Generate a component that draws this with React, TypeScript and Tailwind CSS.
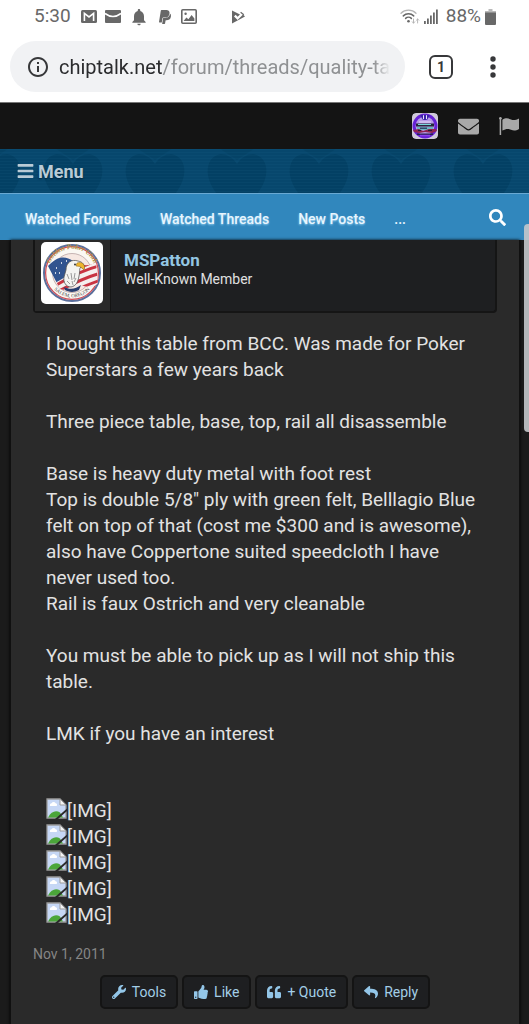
import React from 'react';
import {
  FaBars,
  FaEnvelope,
  FaPaypal,
  FaQuoteLeft,
  FaReply,
  FaSearch,
  FaThumbsUp,
  FaWrench,
} from 'react-icons/fa';
import { MdInfoOutline, MdNotifications } from 'react-icons/md';

const GmailIcon = () => (
  <svg viewBox="0 0 16 13" className="h-[13px] w-4" aria-hidden="true">
    <rect width="16" height="13" rx="1.5" fill="#686868" />
    <path d="M3.4 11V3.4L8 7L12.6 3.4V11" fill="none" stroke="#fff" strokeWidth="1.6" />
  </svg>
);

const MailIcon = () => (
  <svg viewBox="0 0 16 13" className="h-[13px] w-4" aria-hidden="true">
    <rect width="16" height="13" rx="1" fill="#686868" />
    <path d="M0 3.4Q8 9.6 16 3.4" fill="none" stroke="#fff" strokeWidth="1.6" />
  </svg>
);

const PictureIcon = () => (
  <svg viewBox="0 0 16 15" className="h-[15px] w-4" aria-hidden="true">
    <rect x="0.8" y="0.8" width="14.4" height="13.4" rx="1" fill="none" stroke="#686868" strokeWidth="1.6" />
    <circle cx="4.6" cy="4.8" r="1.2" fill="#686868" />
    <path d="M2.6 12L5.4 8.4L7.4 10.2L10.6 6L13.4 9.6V12Z" fill="#686868" />
  </svg>
);

const PlayCheckIcon = () => (
  <svg viewBox="0 0 14 14" className="h-[14px] w-[14px]" aria-hidden="true">
    <path d="M1 0.5L9 4.4L6.6 6.8L4.6 4.8L3 6.4L6.6 10L12 4.600L14 6.600L1 13.5Z" fill="#686868" />
    <path d="M9.600 2.200L12.800 4.800" stroke="#686868" strokeWidth="1.2" />
  </svg>
);

const WifiIcon = () => (
  <svg viewBox="0 0 20 16" className="h-4 w-5" aria-hidden="true">
    <g fill="none" strokeLinecap="round">
      <path d="M1 4.2C5 0.2 12 0.2 16 4.2" stroke="#b5b5b5" strokeWidth="1.3" />
      <path d="M3.3 6.9C6.2 4 10.8 4 13.7 6.9" stroke="#686868" strokeWidth="1.5" />
      <path d="M5.6 9.4C7.2 7.8 9.8 7.8 11.4 9.4" stroke="#686868" strokeWidth="1.5" />
      <path d="M13.5 10v4M12.3 12.800l1.2 1.4l1.2-1.4M17.6 14v-4M16.4 11.200L17.6 10l1.2 1.2" stroke="#b0b0b0" strokeWidth="0.9" />
    </g>
    <circle cx="8.5" cy="12.2" r="1.3" fill="#686868" />
  </svg>
);

const SignalIcon = () => (
  <svg viewBox="0 0 14 15" className="h-[15px] w-[14px]" aria-hidden="true">
    <path
      d="M0 12h1.8v3H0zM3 9.5h1.8V15H3zM6 6.5h1.8V15H6zM9 3.5h1.8V15H9zM12 0.5h1.8V15H12z"
      fill="#686868"
    />
  </svg>
);

const BatteryIcon = () => (
  <svg viewBox="0 0 11 16" className="h-4 w-[11px]" aria-hidden="true">
    <path d="M3.5 0h4v2H11v2H0V2h3.5z" fill="#b9b9b9" />
    <path d="M0 3.4h11V15a1 1 0 0 1-1 1H1a1 1 0 0 1-1-1z" fill="#686868" />
  </svg>
);

const FlagIcon = () => (
  <svg viewBox="0 0 20 18" className="h-[18px] w-5" aria-hidden="true">
    <path d="M1.4 1V18" stroke="#a9a9a9" strokeWidth="1.5" />
    <circle cx="1.4" cy="1.3" r="1.3" fill="#a9a9a9" />
    <path d="M3.4 2.8C7 0.4 9.4 1.3 12 2.5C14.6 3.7 17 3 20 1.4V12C17 13.8 14.6 14 12 12.8C9.4 11.6 7 11.5 3.4 13.6Z" fill="#a9a9a9" />
  </svg>
);

const AccountAvatar = () => (
  <svg viewBox="0 0 26 26" className="h-[26px] w-[26px] rounded" aria-hidden="true">
    <rect width="26" height="26" rx="4" fill="#cfc9d9" />
    <circle cx="13" cy="13" r="11" fill="#b79ae8" stroke="#6722d6" strokeWidth="3" />
    <path d="M8 2l3 5h4l3-5" fill="#3a22a8" />
    <path d="M11.5 2.2v4M14.5 2.2v4" stroke="#e8e2ff" strokeWidth="1" />
    <path d="M7 8.500h12v1H7z" fill="#e3dcf5" />
    <path d="M4 10.5h18v3H4z" fill="#26263a" />
    <path d="M6 11h13v1H6z" fill="#79d6dd" />
    <path d="M5 14h16v3H5z" fill="#6bb5c2" />
    <path d="M8 14.5h7v1.6H8z" fill="#31476b" />
    <path d="M1 17l6-1 4 2 6-2 7 0 1 2-5 2-7-1-6 1-5-1z" fill="#8f2450" />
    <path d="M6 17h3v1H6zM16 17h4v1h-4z" fill="#241b3c" />
    <path d="M5 20.5h16v1.6H5z" fill="#27204f" />
    <path d="M8 22.5h10" stroke="#8a3cf0" strokeWidth="1.4" />
  </svg>
);

const MemberAvatar = () => (
  <svg viewBox="0 0 62 62" className="h-[62px] w-[62px]" role="img" aria-label="MSPatton">
    <defs>
      <clipPath id="flag">
        <path d="M7 24C17 13 25 14 32 19C42 25 50 24 55 20L57 41C49 50 43 41 34 44C27 47 24 49 19 47Z" />
      </clipPath>
      <path id="arc-bottom" d="M10 43A24 24 0 0 0 52 43" />
      <path id="arc-top" d="M8 24A24 24 0 0 1 54 24" />
    </defs>
    <rect width="62" height="62" rx="5" fill="#fff" />
    <circle cx="31" cy="31" r="28" fill="#fbf8f3" stroke="#5b6f9c" strokeWidth="2" />
    <circle cx="31" cy="31" r="26.4" fill="none" stroke="#cf4a55" strokeWidth="1.2" />
    <circle cx="31" cy="31" r="19.5" fill="#f7e8e2" stroke="#b9a4a4" strokeWidth="0.8" />
    <g clipPath="url(#flag)">
      <rect width="62" height="62" fill="#f5efee" />
      <g fill="none" stroke="#c93442" strokeWidth="3">
        <path d="M10 46C22 40 34 30 58 24" />
        <path d="M10 53C24 46 38 37 60 31" />
        <path d="M18 56C30 50 42 44 60 38" />
        <path d="M22 62C34 54 46 50 60 45" />
        <path d="M30 24C40 27 48 22 58 17" />
      </g>
      <path d="M5 24L20 10L34 18L26 34L14 41Z" fill="#31548f" />
      <path d="M15 26h1M20 21h1M25 19h1M18 31h1M14 31h1" stroke="#fff" strokeWidth="1.6" />
    </g>
    <path d="M25 28C25 20 31 17 37 19C42 20 44 23 43 27L40 25C38 26 39 30 38 34C37 40 35 44 30 45C25 45 22 40 23 35Z" fill="#f4f4f1" stroke="#555" strokeWidth="0.8" />
    <path d="M36 21C41 19 45 23 43 28L39 24.5L35 24Z" fill="#eeb52c" stroke="#8b6519" strokeWidth="0.5" />
    <path d="M26 32l2 5M30 31l1 7M34 31l-1 6M26 39l3 3M31 39l1 4M35 36l-2 4" stroke="#999" strokeWidth="1" />
    <circle cx="34" cy="22.5" r="0.9" fill="#222" />
    <path d="M23 45C29 48 35 47 40 43L38 48C33 51 27 50 24 48Z" fill="#293f70" />
    <text fontFamily="Liberation Serif, serif" fontSize="7" fontWeight="700" fontStyle="italic" fill="#a99141" textAnchor="middle">
      <textPath href="#arc-top" startOffset="50%">Golden Poker Club</textPath>
    </text>
    <text fontFamily="Liberation Serif, serif" fontSize="5" fill="#444" textAnchor="middle">
      <textPath href="#arc-bottom" startOffset="50%">SALEM, OREGON</textPath>
    </text>
  </svg>
);

const BrokenImage = () => (
  <svg viewBox="0 0 21 21" className="h-[21px] w-[21px] shrink-0" aria-hidden="true">
    <path d="M1 1H14L20 7V20H1Z" fill="#c6d7f5" stroke="#9b9b9b" strokeWidth="1.3" />
    <path d="M4 8a2 2 0 0 1 1.6-2.8a2.2 2.2 0 0 1 4 0A1.6 1.6 0 0 1 10.5 8Z" fill="#fff" />
    <path d="M2 19.4C5 13.5 10 11.6 14 14.5L17 19.4Z" fill="#4ba63a" />
    <path d="M14 1V7H20Z" fill="#f4f4f4" stroke="#9b9b9b" strokeWidth="1" />
    <path d="M9 21L21 10.5V13L12 21Z" fill="#2a2a2a" />
  </svg>
);

const HeartPattern = () => (
  <svg className="absolute inset-0 h-full w-full" aria-hidden="true">
    <defs>
      <pattern id="hearts" width="82" height="44" x="32" patternUnits="userSpaceOnUse">
        <path d="M0 0H82V44H0Z" fill="#07476d" />
        <path d="M24 0H58L41 11Z" fill="#054367" />
        <path d="M41 15C34 3 20 2 14 12C9 21 12 33 20 44H62C70 33 73 21 68 12C62 2 48 3 41 15Z" fill="#034064" />
      </pattern>
      <pattern id="lines" width="4" height="3" patternUnits="userSpaceOnUse">
        <path d="M0 0.5H4" stroke="#1a5f86" strokeWidth="1" opacity="0.15" />
      </pattern>
    </defs>
    <rect width="100%" height="100%" fill="url(#hearts)" />
    <rect width="100%" height="100%" fill="url(#lines)" />
  </svg>
);

const StatusBar = () => (
  <div className="flex h-[33px] items-center pr-[33px] pl-[34px] text-[19px] text-[#686868]">
    <span>5:30</span>
    <div className="ml-[10px] flex items-center gap-2">
      <GmailIcon />
      <MailIcon />
      <MdNotifications className="h-5 w-5" />
      <FaPaypal className="h-4 w-4" />
      <PictureIcon />
    </div>
    <div className="ml-[34px]">
      <PlayCheckIcon />
    </div>
    <div className="ml-auto flex items-center gap-1">
      <WifiIcon />
      <SignalIcon />
      <span className="ml-1">88%</span>
      <BatteryIcon />
    </div>
  </div>
);

const AddressBar = () => (
  <div className="flex items-center pt-2 pr-6 pb-[10px] pl-[10px]">
    <button
      type="button"
      aria-label="Address bar"
      className="flex h-[51px] min-w-0 flex-1 items-center rounded-full bg-[#f1f2f4] pr-3 pl-4 text-left text-[20px]"
    >
      <MdInfoOutline className="h-6 w-6 shrink-0 text-[#37383a]" />
      <span className="ml-[9px] overflow-hidden whitespace-nowrap text-[#8f9193] [mask-image:linear-gradient(to_right,#000_calc(100%-16px),transparent)]">
        <span className="text-[#2b2c2e]">chiptalk.net</span>/forum/threads/quality-ta
      </span>
    </button>
    <button
      type="button"
      aria-label="Open tabs"
      className="ml-6 flex h-6 w-6 items-center justify-center rounded-md border-2 border-[#37383a] text-sm font-bold text-[#37383a]"
    >
      1
    </button>
    <button type="button" aria-label="More options" className="ml-7 flex h-8 w-6 items-center justify-center">
      <svg viewBox="0 0 6 22" className="h-[22px] w-[6px]" fill="#37383a" aria-hidden="true">
        <circle cx="3" cy="3" r="2.7" />
        <circle cx="3" cy="11" r="2.7" />
        <circle cx="3" cy="19" r="2.7" />
      </svg>
    </button>
  </div>
);

const ForumHeader = () => (
  <header>
    <div className="flex h-[47px] items-center justify-end gap-5 border-t border-[#777] bg-[#141414] pr-[10px]">
      <a href="#account" aria-label="Account">
        <AccountAvatar />
      </a>
      <a href="#inbox" aria-label="Inbox">
        <FaEnvelope className="h-[21px] w-[21px] text-[#a9a9a9]" />
      </a>
      <a href="#alerts" aria-label="Alerts">
        <FlagIcon />
      </a>
    </div>
    <div className="relative h-11 bg-[#07476d]">
      <HeartPattern />
      <button
        type="button"
        className="relative flex h-full items-center gap-1 pl-[17px] text-[18px] font-bold text-[#b9cbd6] [text-shadow:0_1px_2px_#002238]"
      >
        <FaBars className="h-[18px] w-[17px]" />
        Menu
      </button>
    </div>
    <nav className="flex h-[47px] items-center border-t border-[#69a9d3] bg-[#3187bd] pt-1 pr-[23px] pl-[25px] text-sm font-medium text-[#e8f5fd] [text-shadow:0_1px_2px_#8fcdf0]">
      <a href="#watched-forums">Watched Forums</a>
      <a href="#watched-threads" className="ml-[29px]">Watched Threads</a>
      <a href="#new-posts" className="ml-[29px]">New Posts</a>
      <button type="button" aria-label="More links" className="ml-[29px]">...</button>
      <button type="button" aria-label="Search" className="ml-auto pb-1">
        <FaSearch className="h-[17px] w-[17px] text-white" />
      </button>
    </nav>
  </header>
);

const images = [1, 2, 3, 4, 5];

const actions = [
  { label: 'Tools', icon: FaWrench },
  { label: 'Like', icon: FaThumbsUp },
  { label: '+ Quote', icon: FaQuoteLeft },
  { label: 'Reply', icon: FaReply },
];

const Post = () => (
  <article className="mr-[9px] ml-[10px] border-x border-[#101010] bg-[#2a2a2a] pr-[22px] pb-4 pl-[22px] shadow-[0_0_3px_#000]">
    <div className="flex h-[73px] rounded-b border-2 border-t-0 border-[#151515] bg-[#1e1f21]">
      <div className="w-[76px] shrink-0 border-r border-[#141414] bg-[#292929] pt-[2px] pl-[6px]">
        <MemberAvatar />
      </div>
      <div className="pt-[9px] pl-[13px]">
        <a href="#mspatton" className="block text-[17px] leading-[22px] font-bold text-[#93c6e3]">
          MSPatton
        </a>
        <p className="text-sm leading-4 text-[#e0e0e0]">Well-Known Member</p>
      </div>
    </div>

    <div className="pt-[18px] pl-[13px] text-[19px] leading-[26px] text-[#e2e2e2]">
      <p className="mb-[26px]">
        I bought this table from BCC. Was made for Poker
        <br />
        Superstars a few years back
      </p>
      <p className="mb-[26px]">Three piece table, base, top, rail all disassemble</p>
      <p className="mb-[26px]">
        Base is heavy duty metal with foot rest
        <br />
        Top is double 5/8" ply with green felt, Belllagio Blue
        <br />
        felt on top of that (cost me $300 and is awesome),
        <br />
        also have Coppertone suited speedcloth I have
        <br />
        never used too.
        <br />
        Rail is faux Ostrich and very cleanable
      </p>
      <p className="mb-[26px]">
        You must be able to pick up as I will not ship this
        <br />
        table.
      </p>
      <p className="mb-[51px]">LMK if you have an interest</p>
      {images.map((n) => (
        <div key={n} className="flex">
          <BrokenImage />
          <span>[IMG]</span>
        </div>
      ))}
    </div>

    <time dateTime="2011-11-01" className="mt-4 block text-sm leading-5 text-[#858585]">
      Nov 1, 2011
    </time>
    <div className="mt-[11px] flex justify-center gap-1">
      {actions.map(({ label, icon: Icon }) => (
        <button
          key={label}
          type="button"
          className="flex h-[34px] items-center gap-[6px] rounded-[5px] border-2 border-[#141414] bg-[#1e1f21] px-[10px] text-sm text-[#a3cee7]"
        >
          <Icon className="h-[14px] w-[14px] text-[#93c6e8]" />
          {label}
        </button>
      ))}
    </div>
  </article>
);

const App: React.FC = () => {
  return (
    <div className="relative min-h-screen overflow-hidden bg-[#1b1b1b] font-[Roboto,sans-serif]">
      <div className="bg-white">
        <StatusBar />
        <AddressBar />
      </div>
      <ForumHeader />
      <main>
        <Post />
      </main>
      {/* Scroll thumb */}
      <div className="absolute top-56 right-0 h-52 w-[5px] rounded-l bg-[#c4c8cb]/90" />
    </div>
  );
};

export default App;
